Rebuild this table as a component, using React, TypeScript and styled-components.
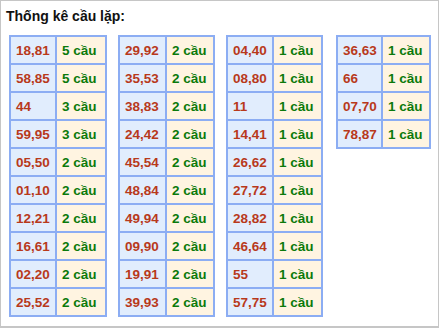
import React from "react";
import styled, { createGlobalStyle } from "styled-components";

const Global = createGlobalStyle`
  html, body { margin: 0; padding: 0; background: #ffffff; }
  body { font-family: "Liberation Sans", Arial, sans-serif; overflow: hidden; }
`;

const Frame = styled.div`
  box-sizing: border-box;
  width: 441px;
  height: 329px;
  margin: -1px 0 0 -1px;
  border: 2px solid #c6c6c6;
  background: #ffffff;
`;

const Title = styled.div`
  padding: 7px 0 0 5px;
  font-size: 14px;
  line-height: 16px;
  font-weight: bold;
  color: #111111;
`;

const Tables = styled.div`
  display: flex;
  align-items: flex-start;
  gap: 11px;
  padding: 11px 0 0 8px;
`;

const Table = styled.div<{ $cols: string; $shift?: number }>`
  display: grid;
  grid-template-columns: ${(p) => p.$cols};
  grid-auto-rows: 28px;
  margin-left: ${(p) => p.$shift ?? 0}px;
  box-sizing: border-box;
  border-left: 2px solid #8cadf3;
  border-top: 2px solid #8cadf3;
`;

const Cell = styled.div<{ $kind: "num" | "count" }>`
  box-sizing: border-box;
  display: flex;
  align-items: center;
  padding-left: 5px;
  border-right: 2px solid #8cadf3;
  border-bottom: 2px solid #8cadf3;
  font-size: 13.5px;
  font-weight: bold;
  white-space: nowrap;
  background: ${(p) => (p.$kind === "num" ? "#e1edfd" : "#fff4e1")};
  color: ${(p) => (p.$kind === "num" ? "#b8391b" : "#0b7a0b")};
`;

type Group = { cols: string; shift?: number; rows: [string, string][] };

const groups: Group[] = [
  {
    cols: "46px 50px",
    rows: [
      ["18,81", "5 cầu"],
      ["58,85", "5 cầu"],
      ["44", "3 cầu"],
      ["59,95", "3 cầu"],
      ["05,50", "2 cầu"],
      ["01,10", "2 cầu"],
      ["12,21", "2 cầu"],
      ["16,61", "2 cầu"],
      ["02,20", "2 cầu"],
      ["25,52", "2 cầu"],
    ],
  },
  {
    cols: "47px 48px",
    rows: [
      ["29,92", "2 cầu"],
      ["35,53", "2 cầu"],
      ["38,83", "2 cầu"],
      ["24,42", "2 cầu"],
      ["45,54", "2 cầu"],
      ["48,84", "2 cầu"],
      ["49,94", "2 cầu"],
      ["09,90", "2 cầu"],
      ["19,91", "2 cầu"],
      ["39,93", "2 cầu"],
    ],
  },
  {
    cols: "46px 49px",
    rows: [
      ["04,40", "1 cầu"],
      ["08,80", "1 cầu"],
      ["11", "1 cầu"],
      ["14,41", "1 cầu"],
      ["26,62", "1 cầu"],
      ["27,72", "1 cầu"],
      ["28,82", "1 cầu"],
      ["46,64", "1 cầu"],
      ["55", "1 cầu"],
      ["57,75", "1 cầu"],
    ],
  },
  {
    cols: "45px 48px",
    shift: 2,
    rows: [
      ["36,63", "1 cầu"],
      ["66", "1 cầu"],
      ["07,70", "1 cầu"],
      ["78,87", "1 cầu"],
    ],
  },
];

export default function App() {
  return (
    <>
      <Global />
      <Frame>
        <Title>Thống kê cầu lặp:</Title>
        <Tables>
          {groups.map((g, i) => (
            <Table key={i} $cols={g.cols} $shift={g.shift}>
              {g.rows.map(([n, c]) => (
                <React.Fragment key={n}>
                  <Cell $kind="num">{n}</Cell>
                  <Cell $kind="count">{c}</Cell>
                </React.Fragment>
              ))}
            </Table>
          ))}
        </Tables>
      </Frame>
    </>
  );
}
